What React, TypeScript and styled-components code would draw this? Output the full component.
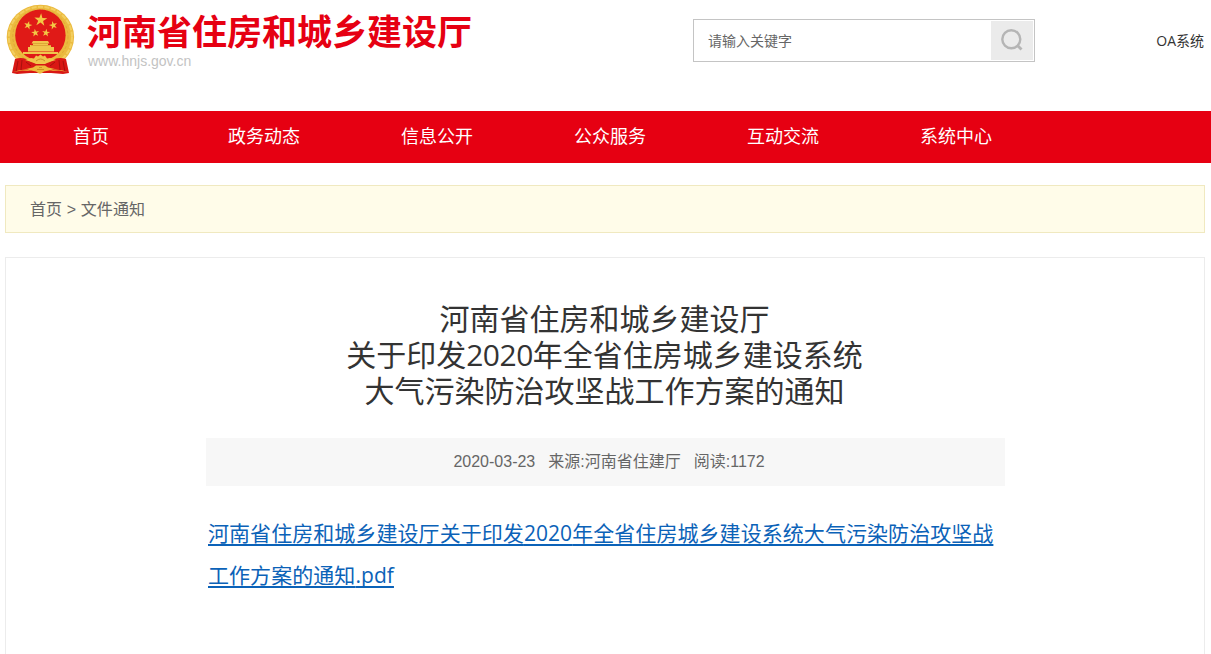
import React from "react";
import styled, { createGlobalStyle } from "styled-components";

const GlobalStyle = createGlobalStyle`
  * { box-sizing: border-box; }
  html, body { margin: 0; padding: 0; background: #fff; overflow: hidden; }
  body { font-family: "Noto Sans CJK SC", sans-serif; color: #333; }
`;

const Page = styled.div`
  height: 654px;
  overflow: hidden;
`;

const Header = styled.header`
  display: flex;
  height: 111px;
  padding: 0 6px 0 5px;
`;

const Emblem = styled.svg`
  width: 72px;
  height: 74px;
  margin-top: 3px;
  flex: none;
`;

const Brand = styled.div`
  width: 605px;
  margin-left: 11px;
  padding-top: 7px;
`;

const SiteName = styled.h1`
  margin: 0 0 0 -1px;
  font-size: 35px;
  line-height: 46px;
  font-weight: 700;
  color: #e60012;
  white-space: nowrap;
`;

const SiteUrl = styled.div`
  font: 14px/16px "Liberation Sans", sans-serif;
  color: #c3c3c3;
`;

const Search = styled.form`
  display: flex;
  width: 342px;
  height: 43px;
  margin-top: 19px;
  padding: 1px;
  border: 1px solid #c4c4c4;
`;

const SearchInput = styled.input`
  flex: 1;
  min-width: 0;
  padding: 0 13px 2px;
  border: 0;
  outline: 0;
  background: none;
  font: 14px "Noto Sans CJK SC", sans-serif;
  &::placeholder { color: #666; opacity: 1; }
`;

const SearchButton = styled.button`
  display: flex;
  align-items: center;
  justify-content: center;
  width: 42px;
  height: 39px;
  padding: 0 0 2px;
  border: 0;
  background: #ebebeb;
`;

const OaLink = styled.a`
  margin: 31px 1px 0 auto;
  font: 14px/20px "Open Sans", "Noto Sans CJK SC", sans-serif;
  color: #333;
`;

const Nav = styled.nav`
  display: flex;
  height: 52px;
  padding-left: 4.5px;
  background: #e60012;
`;

const NavItem = styled.a`
  width: 173px;
  font-size: 18px;
  line-height: 49px;
  text-align: center;
  color: #fff;
`;

const Breadcrumb = styled.div`
  height: 48px;
  margin: 22px 6px 0 5px;
  padding-left: 24px;
  border: 1px solid #f0e9c0;
  background: #fffce9;
  font: 16px/47px "Liberation Sans", "Noto Sans CJK SC", sans-serif;
  letter-spacing: 0.1px;
  color: #666;
`;

const Article = styled.article`
  height: 420px;
  margin: 24px 6px 0 5px;
  padding: 41px 199px 0 200px;
  border: 1px solid #ececec;
`;

const Title = styled.h2`
  margin: 0 2px 0 0;
  font-size: 30px;
  line-height: 36px;
  font-weight: 400;
  text-align: center;
  color: #333;
`;

const TitleDigits = styled.span`
  font-family: "Open Sans", sans-serif;
  line-height: 0;
  letter-spacing: -0.5px;
`;

const Meta = styled.div`
  display: flex;
  justify-content: center;
  gap: 13px;
  height: 48px;
  margin-top: 31px;
  padding-left: 7px;
  background: #f7f7f7;
  font: 16px/48px "Liberation Sans", "Noto Sans CJK SC", sans-serif;
  color: #666;
`;

const Body = styled.div`
  margin-top: 25px;
  padding-left: 2px;
  font-size: 21px;
  line-height: 42px;
  white-space: nowrap;
`;

const FileLink = styled.a`
  letter-spacing: 0.06px;
  color: #0b62b8;
  text-decoration: underline;
  text-decoration-thickness: 2px;
  text-underline-offset: 3px;
  text-decoration-skip-ink: none;
`;

const LinkLatin = styled.span`
  font-family: "Open Sans", sans-serif;
  line-height: 0;
`;

const star = (cx: number, cy: number, r: number, turn = 0) =>
  Array.from({ length: 10 }, (_, i) => {
    const a = ((i * 36 - 90 + turn) * Math.PI) / 180;
    const d = i % 2 ? r * 0.38 : r;
    return `${(cx + d * Math.cos(a)).toFixed(2)},${(cy + d * Math.sin(a)).toFixed(2)}`;
  }).join(" ");

const NationalEmblem = () => (
  <Emblem viewBox="0 0 72 74">
    <ellipse cx="35.4" cy="34" rx="33.7" ry="32.3" fill="#ebba3e" />
    <ellipse cx="35.4" cy="34" rx="31.6" ry="30.2" fill="none" stroke="#f3cf60" strokeWidth="2" strokeDasharray="5 1.5" />
    <ellipse cx="35.4" cy="33.5" rx="27.6" ry="27" fill="none" stroke="#e0a836" strokeWidth="1" strokeDasharray="3 2" />
    <ellipse cx="35.4" cy="32.2" rx="25.2" ry="25.6" fill="#e01a17" />
    <polygon points={star(35.7, 17, 6.8, 4)} fill="#f3c945" />
    <polygon points={star(23, 22.3, 4.4, 15)} fill="#f3c945" />
    <polygon points={star(48.3, 22.3, 4.4, -15)} fill="#f3c945" />
    <polygon points={star(30.3, 29.8, 4.2, -8)} fill="#f3c945" />
    <polygon points={star(41, 29.8, 4.2, 8)} fill="#f3c945" />
    <path d="M28 38h15l1.5 2.5H43v1.5h3v2h3v4.5H23V44h2v-2h3v-1.5h-1.5z" fill="#f0c54c" />
    <path d="M26 42.5h20M28 40.5h15" stroke="#d59a2e" strokeWidth=".7" />
    <path d="M18 49h35v2H18z" fill="#f0c54c" />
    <path d="M10 56q9-3 16 3 9 3 19 0 7-6 16-3l3 14-6 1-12-1H25l-13 1-5-1z" fill="#d91714" />
    <path d="M13 58l-2 11M17 57l-1 10M58 58l2 11M54 57l1 10M21 59l5 4M50 59l-5 4" stroke="#a8100e" strokeWidth="1" />
    <path d="M20 57l6-2 3 .5 2-3 2 1 2.5-2 2.5 2 2-1 2 3 3-.5 6 2-7 2-4 2H31l-4-2z" fill="#f0c54c" />
    <path d="M31 58q4.5-4 9 0" stroke="#cb8a22" strokeWidth=".9" fill="none" />
    <path d="M21 66l7-1.5 3-2h9l3 2 7 1.500-6 1.500-5 1-3 2h-2l-3-2-5-1z" fill="#edbb3d" />
    <path d="M8 69q6-2.500 13-2.500l6 1.500-10-.5zM63 69q-6-2.500-13-2.500l-6 1.500 10-.5z" fill="#edbb3d" />
    <path d="M32 66.500h7M34 64.500h3" stroke="#c7851c" strokeWidth=".8" />
  </Emblem>
);

const SearchIcon = () => (
  <svg width="24" height="24" viewBox="0 0 24 24" fill="none" stroke="#b5b5b5" strokeWidth="2.4">
    <circle cx="11.3" cy="11.2" r="9" />
    <path d="M17.5 17.5L21.5 21.5" strokeWidth="2.8" />
  </svg>
);

const navItems = ["首页", "政务动态", "信息公开", "公众服务", "互动交流", "系统中心"];

export default function App() {
  return (
    <Page>
      <GlobalStyle />
      <Header>
        <NationalEmblem />
        <Brand>
          <SiteName>河南省住房和城乡建设厅</SiteName>
          <SiteUrl>www.hnjs.gov.cn</SiteUrl>
        </Brand>
        <Search>
          <SearchInput placeholder="请输入关键字" />
          <SearchButton type="button" aria-label="搜索">
            <SearchIcon />
          </SearchButton>
        </Search>
        <OaLink>OA系统</OaLink>
      </Header>
      <Nav>
        {navItems.map((item) => (
          <NavItem key={item}>{item}</NavItem>
        ))}
      </Nav>
      <Breadcrumb>首页 &gt; 文件通知</Breadcrumb>
      <Article>
        <Title>
          河南省住房和城乡建设厅
          <br />
          关于印发<TitleDigits>2020</TitleDigits>年全省住房城乡建设系统
          <br />
          大气污染防治攻坚战工作方案的通知
        </Title>
        <Meta>
          <span>2020-03-23</span>
          <span>来源:河南省住建厅</span>
          <span>阅读:1172</span>
        </Meta>
        <Body>
          <FileLink>
            河南省住房和城乡建设厅关于印发<LinkLatin>2020</LinkLatin>年全省住房城乡建设系统大气污染防治攻坚战
            <br />
            工作方案的通知<LinkLatin>.pdf</LinkLatin>
          </FileLink>
        </Body>
      </Article>
    </Page>
  );
}
